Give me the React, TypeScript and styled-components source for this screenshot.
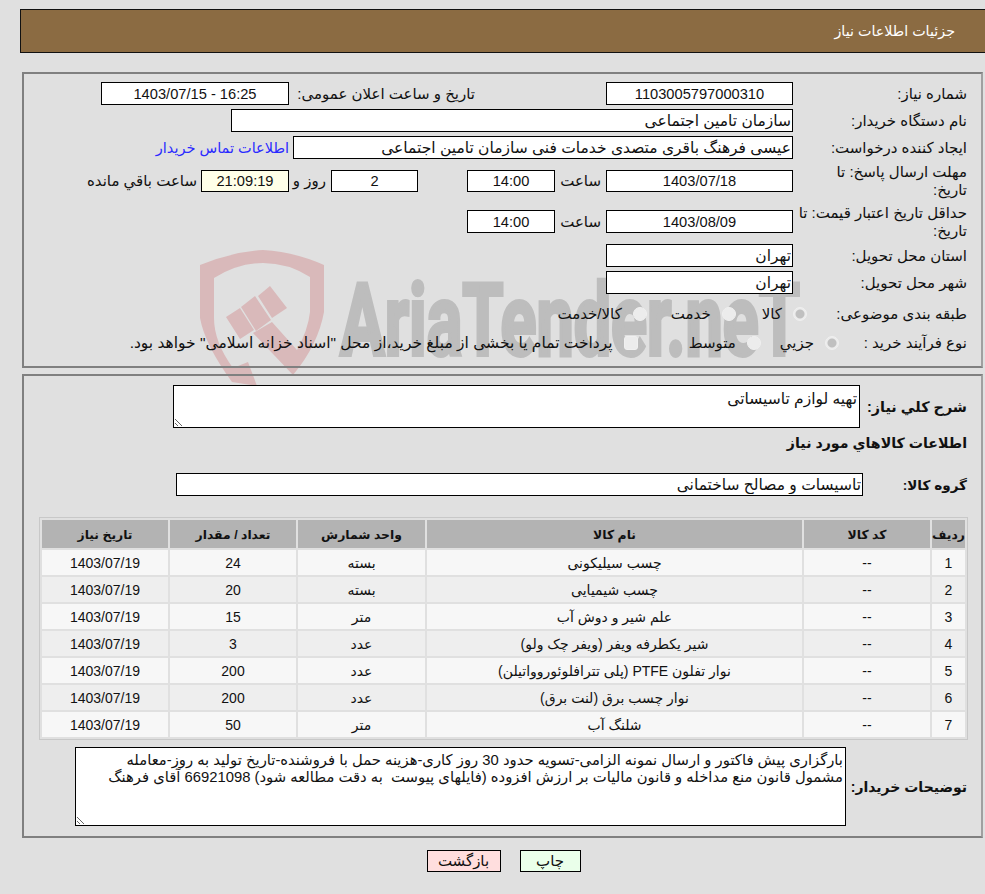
import React from "react";
import styled, { createGlobalStyle } from "styled-components";

const Global = createGlobalStyle`
  html, body { margin: 0; padding: 0; background: #e0e0e0; }
  body { font-family: "Liberation Sans", "DejaVu Sans", sans-serif; font-size: 15px; color: #111; overflow: hidden; }
  #root { height: 894px; position: relative; overflow: hidden; }
`;

const Page = styled.div`
  direction: rtl;
  width: 985px;
  height: 894px;
  position: relative;
  padding-top: 9px;
  box-sizing: border-box;
`;

const Watermark = styled.svg`
  position: absolute;
  left: 190px;
  top: 240px;
  z-index: 0;
`;

const Content = styled.div`
  position: relative;
  z-index: 1;
`;

const Header = styled.header`
  margin-left: 20px;
  height: 44px;
  box-sizing: border-box;
  background: #8b6b42;
  border: 1px solid #111;
  border-right: 0;
  color: #fff;
  font-size: 14.3px;
  display: flex;
  align-items: center;
  padding-right: 30px;
`;

const Panel = styled.section<{ $top: number; $h: number }>`
  margin: ${(p) => p.$top}px 2px 0 22px;
  height: ${(p) => p.$h}px;
  box-sizing: border-box;
  border: 2px solid #808080;
  border-right-color: #a0a0a0;
`;

const Row = styled.div<{ $top: number; $h?: number }>`
  display: flex;
  align-items: center;
  height: ${(p) => p.$h ?? 23}px;
  margin-top: ${(p) => p.$top}px;
  padding-right: 14px;
`;

const Label = styled.label`
  width: 174px;
  flex: none;
  line-height: 18px;
  white-space: nowrap;
`;

const Field = styled.input<{ $w: number; $num?: boolean; $tint?: string }>`
  width: ${(p) => p.$w}px;
  height: 100%;
  flex: none;
  box-sizing: border-box;
  border: 1px solid #000;
  border-radius: 0;
  background: ${(p) => p.$tint ?? "#fff"};
  padding: 0 1px;
  margin: 0;
  font-family: inherit;
  font-size: ${(p) => (p.$num ? "14.67px" : "15.5px")};
  color: #111;
  direction: rtl;
  text-align: ${(p) => (p.$num ? "center" : "right")};
  outline: none;
`;

const Inline = styled.span<{ $w: number; $before?: number }>`
  flex: none;
  width: ${(p) => p.$w}px;
  padding-right: ${(p) => p.$before ?? 5}px;
  box-sizing: border-box;
  white-space: nowrap;
`;

const ContactLink = styled.a`
  color: #2a2aff;
  margin-right: 4px;
  font-size: 14.5px;
  white-space: nowrap;
  text-decoration: none;
`;

const Options = styled.div`
  display: flex;
  align-items: center;
`;

const Choice = styled.input<{ $space: number }>`
  appearance: none;
  width: 14px;
  height: 14px;
  margin: 0 ${(p) => p.$space}px 0 0;
  flex: none;
  box-sizing: border-box;
  border-radius: ${(p) => (p.type === "checkbox" ? "3px" : "50%")};
  border: 1px solid #f0f0f0;
  background: ${(p) => (p.checked ? "radial-gradient(circle, #c0c0c0 0 4px, #ececec 5px)" : "#ececec")};
`;

const ChoiceText = styled.span<{ $wide?: boolean }>`
  margin-right: 11px;
  font-size: ${(p) => (p.$wide ? "15.5px" : "15px")};
  white-space: nowrap;
`;

const BoldLabel = styled.label<{ $w: number; $size?: number }>`
  flex: none;
  width: ${(p) => p.$w}px;
  font-weight: 700;
  font-size: ${(p) => p.$size ?? 14.4}px;
  white-space: nowrap;
`;

const Heading = styled.h3`
  margin: 3px 14px 0 0;
  height: 24px;
  line-height: 24px;
  font-size: 14.2px;
  font-weight: 700;
`;

const Area = styled.textarea<{ $w: number; $h: number; $size: number }>`
  width: ${(p) => p.$w}px;
  height: ${(p) => p.$h}px;
  flex: none;
  display: block;
  box-sizing: border-box;
  border: 1px solid #000;
  border-radius: 0;
  background: #fff;
  margin: 0;
  padding: 4px 2px 2px;
  font-family: inherit;
  font-size: ${(p) => p.$size}px;
  line-height: 17px;
  color: #111;
  direction: rtl;
  outline: none;
  resize: vertical;
`;

const Table = styled.table`
  width: 929px;
  margin: 21px 13px 0 0;
  table-layout: fixed;
  border-collapse: separate;
  border-spacing: 2px;
  border: 1px solid #c8c8c8;
  font-size: 14px;
`;

const Th = styled.th`
  height: 28px;
  padding: 0;
  background: #b3b3b3;
  font-size: 12.4px;
  font-weight: 700;
  text-align: center;
`;

const Td = styled.td<{ $even: boolean }>`
  height: 25px;
  padding: 0;
  background: ${(p) => (p.$even ? "#eeeeee" : "#f7f7f7")};
  text-align: center;
`;

const Actions = styled.div`
  display: flex;
  justify-content: center;
  gap: 19px;
  margin-top: 12px;
  padding-left: 22px;
`;

const Button = styled.button<{ $tint: string; $w: number }>`
  width: ${(p) => p.$w}px;
  height: 22px;
  padding: 0;
  box-sizing: border-box;
  border: 1px solid #000;
  background: ${(p) => p.$tint};
  font: inherit;
  color: #111;
`;

const items = [
  ["چسب سیلیکونی", "بسته", "24"],
  ["چسب شیمیایی", "بسته", "20"],
  ["علم شیر و دوش آب", "متر", "15"],
  ["شیر یکطرفه ویفر (ویفر چک ولو)", "عدد", "3"],
  ["نوار تفلون PTFE (پلی تترافلوئوروواتیلن)", "عدد", "200"],
  ["نوار چسب برق (لنت برق)", "عدد", "200"],
  ["شلنگ آب", "متر", "50"],
];

const columns: [string, number][] = [
  ["ردیف", 33],
  ["کد کالا", 126],
  ["نام کالا", 375],
  ["واحد شمارش", 127],
  ["تعداد / مقدار", 126],
  ["تاریخ نیاز", 126],
];

const notes =
  "بارگزاری پیش فاکتور و ارسال نمونه الزامی-تسویه حدود 30 روز کاری-هزینه حمل با فروشنده-تاریخ تولید به روز-معامله\nمشمول قانون منع مداخله و قانون مالیات بر ارزش افزوده (فایلهای پیوست  به دقت مطالعه شود) 66921098 آقای فرهنگ";

export default function App() {
  return (
    <Page>
      <Global />
      <Watermark width="620" height="150" viewBox="190 240 620 150" aria-hidden="true">
        <path
          fill="#d9b9ba"
          fillRule="evenodd"
          d="M263 250 Q232 252 200 265 V318 Q205 345 232 382 L257 386 L248 362 L233 368 Q214 342 214 318 V278 Q238 263 263 263 Q288 263 310 277 V312 Q308 330 297 350 L272 322 L253 333 L293 375 Q318 345 324 312 V265 Q295 252 263 250 Z"
        />
        <path fill="#d9b9ba" d="M270 286 L287 308 L272 318 L258 296 Z M255 296 L271 320 L256 331 L241 307 Z M240 308 L254 330 L240 339 L226 317 Z" />
        <text
          x="340"
          y="355"
          fill="#bdbdbd"
          stroke="#bdbdbd"
          strokeWidth="4"
          fontFamily="Roboto, sans-serif"
          fontWeight="700"
          fontSize="100"
          textLength="460"
          lengthAdjust="spacingAndGlyphs"
          direction="ltr"
        >
          AriaTender.neT
        </text>
      </Watermark>
      <Content>
        <Header>جزئیات اطلاعات نیاز</Header>

        <Panel $top={19} $h={296}>
          <Row $top={8}>
            <Label>شماره نیاز:</Label>
            <Field $w={187} $num readOnly value="1103005797000310" />
            <Inline $w={317} $before={131}>تاریخ و ساعت اعلان عمومی:</Inline>
            <Field $w={188} $num readOnly value="16:25 - 1403/07/15" />
          </Row>
          <Row $top={4}>
            <Label>نام دستگاه خریدار:</Label>
            <Field $w={562} readOnly value="سازمان تامین اجتماعی" />
          </Row>
          <Row $top={4}>
            <Label>ایجاد کننده درخواست:</Label>
            <Field $w={500} readOnly value="عیسی فرهنگ باقری متصدی خدمات فنی سازمان تامین اجتماعی" />
            <ContactLink href="#">اطلاعات تماس خریدار</ContactLink>
          </Row>
          <Row $top={11} $h={22}>
            <Label>مهلت ارسال پاسخ: تا<br />تاریخ:</Label>
            <Field $w={187} $num readOnly value="1403/07/18" />
            <Inline $w={51}>ساعت</Inline>
            <Field $w={88} $num readOnly value="14:00" />
            <Inline $w={49} />
            <Field $w={87} $num readOnly value="2" />
            <Inline $w={42}>روز و</Inline>
            <Field $w={88} $num $tint="#ffffe8" readOnly value="21:09:19" />
            <Inline $w={125} $before={4}>ساعت باقي مانده</Inline>
          </Row>
          <Row $top={18}>
            <Label>حداقل تاریخ اعتبار قیمت: تا<br />تاریخ:</Label>
            <Field $w={187} $num readOnly value="1403/08/09" />
            <Inline $w={51}>ساعت</Inline>
            <Field $w={88} $num readOnly value="14:00" />
          </Row>
          <Row $top={11}>
            <Label>استان محل تحویل:</Label>
            <Field $w={187} readOnly value="تهران" />
          </Row>
          <Row $top={4}>
            <Label>شهر محل تحویل:</Label>
            <Field $w={187} readOnly value="تهران" />
          </Row>
          <Row $top={8}>
            <Label>طبقه بندی موضوعی:</Label>
            <Options>
              <Choice type="radio" readOnly checked $space={-14} />
              <ChoiceText>کالا</ChoiceText>
              <Choice type="radio" readOnly checked={false} $space={26} />
              <ChoiceText>خدمت</ChoiceText>
              <Choice type="radio" readOnly checked={false} $space={24} />
              <ChoiceText>کالا/خدمت</ChoiceText>
            </Options>
          </Row>
          <Row $top={6} $h={24}>
            <Label>نوع فرآیند خرید :</Label>
            <Options>
              <Choice type="radio" readOnly checked $space={-46} />
              <ChoiceText>جزیي</ChoiceText>
              <Choice type="radio" readOnly checked={false} $space={19} />
              <ChoiceText>متوسط</ChoiceText>
              <Choice type="checkbox" readOnly checked={false} $space={51} />
              <ChoiceText $wide>پرداخت تمام یا بخشی از مبلغ خرید،از محل "اسناد خزانه اسلامی" خواهد بود.</ChoiceText>
            </Options>
          </Row>
        </Panel>

        <Panel $top={6} $h={464}>
          <Row $top={9} $h={43}>
            <BoldLabel $w={107}>شرح کلي نیاز:</BoldLabel>
            <Area $w={687} $h={43} $size={15.5} readOnly value="تهیه لوازم تاسیساتی" />
          </Row>
          <Heading>اطلاعات کالاهاي مورد نیاز</Heading>
          <Row $top={18}>
            <BoldLabel $w={104} $size={13.6}>گروه کالا:</BoldLabel>
            <Field $w={687} readOnly value="تاسیسات و مصالح ساختمانی" />
          </Row>
          <Table>
            <colgroup>
              {columns.map(([name, width]) => (
                <col key={name} width={width} />
              ))}
            </colgroup>
            <thead>
              <tr>
                {columns.map(([name]) => (
                  <Th key={name}>{name}</Th>
                ))}
              </tr>
            </thead>
            <tbody>
              {items.map(([name, unit, qty], i) => (
                <tr key={name}>
                  <Td $even={i % 2 === 1}>{i + 1}</Td>
                  <Td $even={i % 2 === 1}>--</Td>
                  <Td $even={i % 2 === 1}>{name}</Td>
                  <Td $even={i % 2 === 1}>{unit}</Td>
                  <Td $even={i % 2 === 1}>{qty}</Td>
                  <Td $even={i % 2 === 1}>1403/07/19</Td>
                </tr>
              ))}
            </tbody>
          </Table>
          <Row $top={7} $h={79}>
            <BoldLabel $w={121} $size={14}>توضیحات خریدار:</BoldLabel>
            <Area $w={771} $h={79} $size={14.8} readOnly value={notes} />
          </Row>
        </Panel>

        <Actions>
          <Button $tint="#eaffea" $w={61}>چاپ</Button>
          <Button $tint="#ffdede" $w={74}>بازگشت</Button>
        </Actions>
      </Content>
    </Page>
  );
}
